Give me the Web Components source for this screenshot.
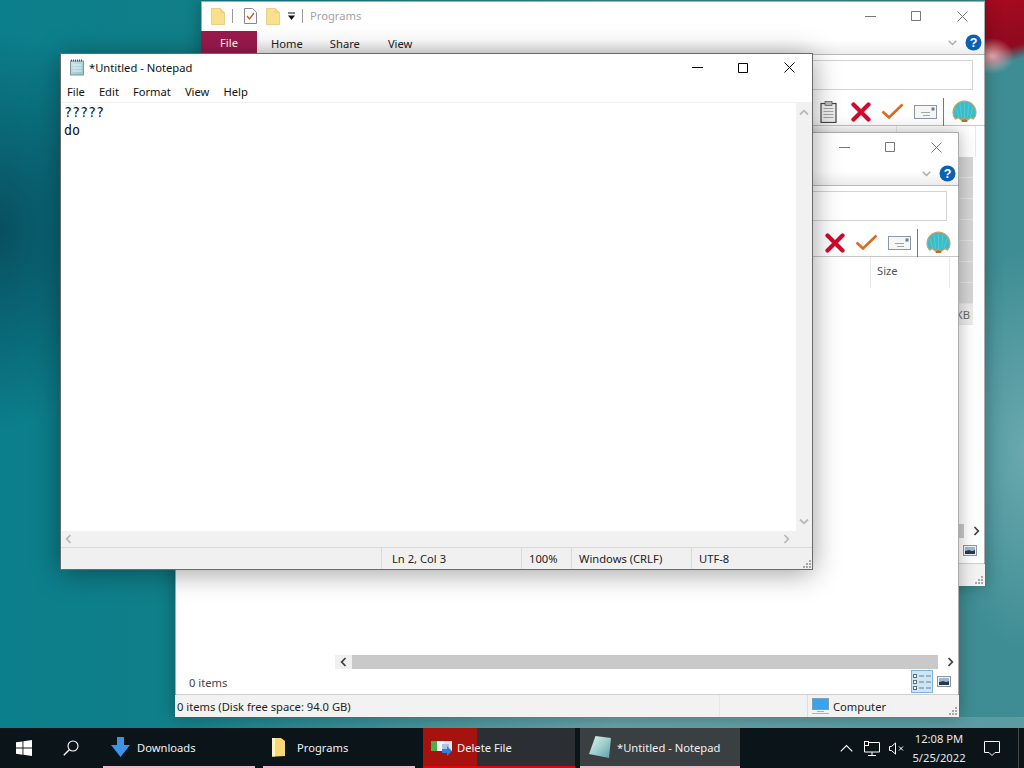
<!DOCTYPE html>
<html lang="en"><head><meta charset="utf-8"><title>Desktop</title>
<style>
html,body{margin:0;height:100%;overflow:hidden;font:11.2px "Noto Sans",sans-serif}
</style></head><body>
<win-desktop>
  <file-explorer slot="windows" id="a" style="--x:201px;--y:1px;--z:1" heading="Programs" quick>
    <file-row shade></file-row><file-row shade></file-row><file-row shade></file-row><file-row shade></file-row><file-row shade></file-row><file-row shade></file-row><file-row shade></file-row>
    <file-row>3 KB</file-row>
  </file-explorer>
  <file-explorer slot="windows" id="b" style="--x:175px;--y:132px;--z:2" heading="Computer" status>
  </file-explorer>
  <note-pad slot="windows" style="--x:60px;--y:53px;--z:3"></note-pad>
  <task-bar slot="bar"></task-bar>
</win-desktop>
<script>
const ICONS = {
  folder:`<svg width="14" height="17" viewBox="0 0 14 17"><path d="M.5.5h9l4 4v12H.5z" fill="#fbe08c" stroke="#e9cf8a"/><path d="M9.5.5v4h4" fill="#f7d877" stroke="#e9cf8a"/></svg>`,
  check:`<svg width="13" height="16" viewBox="0 0 13 16"><path d="M.5.5h8l4 4v11H.5z" fill="#fff" stroke="#888"/><path d="M3 8l2.500 3L10 5" fill="none" stroke="#d2521f" stroke-width="1.300"/></svg>`,
  caret:`<svg width="9" height="9" viewBox="0 0 9 9"><path d="M1 1h7" stroke="#111"/><path d="M1 3.500h7L4.500 8z" fill="#111"/></svg>`,
  min:`<svg width="11" height="11" viewBox="0 0 11 11"><path d="M0 5.500h11" stroke="currentColor"/></svg>`,
  max:`<svg width="10" height="10" viewBox="0 0 10 10"><path d="M.5.5h9v9h-9z" fill="none" stroke="currentColor"/></svg>`,
  close:`<svg width="11" height="11" viewBox="0 0 11 11"><path d="M.5.5l10 10M10.500.5l-10 10" stroke="currentColor"/></svg>`,
  chev:`<svg width="9" height="6" viewBox="0 0 9 6"><path d="M.7.7l3.800 3.800L8.300.7" fill="none" stroke="#aaa" stroke-width="1.400"/></svg>`,
  help:`<svg width="17" height="17" viewBox="0 0 17 17"><circle cx="8.500" cy="8.500" r="8" fill="#0d5fb3"/><text x="8.500" y="13" font-family="Liberation Sans" font-weight="700" font-size="12.500" text-anchor="middle" fill="#fff">?</text></svg>`,
  clip:`<svg width="17" height="22" viewBox="0 0 17 22"><rect x="1" y="2.500" width="15" height="19" fill="#efefef" stroke="#444" stroke-width="1.200"/><rect x="5" y=".5" width="7" height="4" fill="#bbb" stroke="#555" stroke-width=".7"/><path d="M3.500 7.500h10M3.500 10.500h10M3.500 13.500h10M3.500 16.500h10" stroke="#a5a5a5"/></svg>`,
  cross:`<svg width="20" height="20" viewBox="0 0 20 20"><path d="M2.500 2.500l15 15M17.500 2.500l-15 15" stroke="#cf0a2c" stroke-width="4.200" stroke-linecap="round"/></svg>`,
  tick:`<svg width="23" height="17" viewBox="0 0 23 17"><path d="M1.500 8.500l6.500 6L21.500 1.500" fill="none" stroke="#dd6a1f" stroke-width="2.600"/></svg>`,
  mail:`<svg width="23" height="14" viewBox="0 0 23 14"><rect x=".5" y=".5" width="22" height="13" fill="#f6f6f6" stroke="#8b98a4"/><rect x="17.500" y="2.500" width="3" height="3" fill="#667a90"/><path d="M7 7.500h9M9 10.500h7" stroke="#9aa"/></svg>`,
  shell:`<svg width="25" height="23" viewBox="0 0 25 23"><path d="M9 18.500h7l-.8 3.500H9.800z" fill="#b5712d"/><path d="M12.500 1.200C6 1.200 1 6.500 1 12.500c0 2.500 1 5 2.500 6.500l3-1.200L9 19.800l3.500-1.300 3.500 1.300 2.500-2 3 1.200c1.500-1.500 2.500-4 2.500-6.500 0-6-5-11.300-11.500-11.300z" fill="#3cbcc6" stroke="#c9a06c" stroke-width="1.200"/><path d="M12.500 3v15M8 3.500l1.500 14M17 3.500l-1.500 14M4 8l3 9M21 8l-3 9" stroke="#62d3da" stroke-width=".6"/></svg>`,
  detail:`<svg width="19" height="18" viewBox="0 0 19 18"><g fill="#fff" stroke="#5e6b75"><rect x=".5" y="1.500" width="3" height="3"/><rect x=".5" y="7.500" width="3" height="3"/><rect x=".5" y="13.500" width="3" height="3"/></g><path d="M6 3h5M13 3h5M6 9h5M13 9h5M6 15h5M13 15h5" stroke="#6f7f8b"/></svg>`,
  thumb:`<svg width="14" height="11" viewBox="0 0 14 11"><rect x=".5" y=".5" width="13" height="10" fill="#eef3f7" stroke="#8a99a6"/><path d="M2 2h10v3l-4 1-2-1-4 1z" fill="#9fb8d0"/><path d="M2 6l4-1 3 1 3-1v4H2z" fill="#27394b"/></svg>`,
  grip:`<svg width="10" height="10" viewBox="0 0 10 10" fill="#a8a8a8"><rect x="7" y="1" width="2" height="2"/><rect x="4" y="4" width="2" height="2"/><rect x="7" y="4" width="2" height="2"/><rect x="1" y="7" width="2" height="2"/><rect x="4" y="7" width="2" height="2"/><rect x="7" y="7" width="2" height="2"/></svg>`,
  left:`<svg width="7" height="10" viewBox="0 0 7 10"><path d="M5.500 1L1.700 5l3.800 4" fill="none" stroke="currentColor" stroke-width="1.800"/></svg>`,
  right:`<svg width="7" height="10" viewBox="0 0 7 10"><path d="M1.500 1l3.800 4-3.800 4" fill="none" stroke="currentColor" stroke-width="1.800"/></svg>`,
  up:`<svg width="10" height="7" viewBox="0 0 10 7"><path d="M1 5.500L5 1.700l4 3.800" fill="none" stroke="currentColor" stroke-width="1.800"/></svg>`,
  down:`<svg width="10" height="7" viewBox="0 0 10 7"><path d="M1 1.500l4 3.800 4-3.800" fill="none" stroke="currentColor" stroke-width="1.800"/></svg>`,
  monitor:`<svg width="17" height="16" viewBox="0 0 17 16"><rect x=".5" y=".5" width="16" height="11" fill="#3aa3ee" stroke="#7f9fb8"/><path d="M5 13.500h7" stroke="#8fb5d4"/><path d="M0 15.500h17" stroke="#9bb9d0"/></svg>`,
  note:`<svg width="16" height="17" viewBox="0 0 16 17"><defs><linearGradient id="n" x1="0" y1="0" x2="1" y2="1"><stop offset="0" stop-color="#cfe6ea"/><stop offset="1" stop-color="#8fc3cd"/></linearGradient></defs><rect x="1.500" y="2" width="13" height="14" fill="url(#n)" stroke="#80979e"/><path d="M3.500 6h9M3.500 9h9M3.500 12h9" stroke="#e4f2f4"/><path d="M2 1.500h12" stroke="#555" stroke-dasharray="1 1" stroke-width="2"/></svg>`,
  win:`<svg width="16" height="16" viewBox="0 0 16 16" fill="#fff"><path d="M0 2.300l6.500-.9v6.200H0zM7.400 1.300L16 0v7.600H7.400zM0 8.500h6.500v6.200L0 13.800zM7.400 8.500H16V16l-8.600-1.200z"/></svg>`,
  search:`<svg width="16" height="16" viewBox="0 0 16 16"><circle cx="10" cy="6" r="5" fill="none" stroke="#fff" stroke-width="1.100"/><path d="M6.300 9.700L.8 15.200" stroke="#fff" stroke-width="1.300"/></svg>`,
  dl:`<svg width="19" height="20" viewBox="0 0 19 20"><path d="M6 0h7v8h6l-9.500 12L0 8h6z" fill="#3a94ea"/></svg>`,
  tfolder:`<svg width="15" height="20" viewBox="0 0 15 20"><path d="M1 1h9l4 3v15l-9 .5H1z" fill="#f7d675"/><path d="M1 1h3v18.500H1z" fill="#fff3c4"/></svg>`,
  del:`<svg width="22" height="18" viewBox="0 0 22 18"><rect x="0" y="3" width="21" height="10" fill="#dfe4e6"/><rect x="0" y="3" width="6" height="10" fill="#47b04f"/><rect x="6" y="3" width="7" height="10" fill="#f4f6f7"/><path d="M11 6h7v7h-7z" fill="#a9c6ea"/><path d="M11 11h5V8l5 5-5 5v-3h-5z" fill="#2f7fe0"/></svg>`,
  tnote:`<svg width="22" height="24" viewBox="0 0 22 24"><defs><linearGradient id="t" x1="0" y1="0" x2="1" y2="1"><stop offset="0" stop-color="#e6f4f3"/><stop offset=".5" stop-color="#9fd0cf"/><stop offset="1" stop-color="#5f9ea2"/></linearGradient></defs><path d="M6.500 1L22 3l-2 20L0 19z" fill="url(#t)"/></svg>`,
  tup:`<svg width="13" height="8" viewBox="0 0 13 8"><path d="M.7 7.300L6.500 1.500l5.800 5.800" fill="none" stroke="#fff" stroke-width="1.100"/></svg>`,
  net:`<svg width="17" height="15" viewBox="0 0 17 15" fill="none" stroke="#fff"><path d="M.5 1.500h15v9.500h-15z" fill="#0b1519"/><rect x=".5" y=".5" width="4" height="4" fill="#0b1519"/><path d="M8 11v3.500M4 14.500h8"/></svg>`,
  vol:`<svg width="16" height="13" viewBox="0 0 16 13" fill="none" stroke="#fff"><path d="M.5 4.500h2L6.500.9v11.200l-4-3.600h-2z"/><path d="M10 4.500l4 4M14 4.500l-4 4"/></svg>`,
  msg:`<svg width="16" height="15" viewBox="0 0 16 15"><path d="M.5.500h15v11h-4.500l-3 3-3-3H.5z" fill="none" stroke="#fff"/></svg>`
};
const ic = n => ICONS[n];

class WinDesktop extends HTMLElement{constructor(){super();this.attachShadow({mode:'open'}).innerHTML=`<style>
:host{display:flex;flex-direction:column;width:1024px;height:768px;overflow:hidden;position:relative;
background:
 radial-gradient(ellipse 22px 18px at 992px 56px,#e6aeb2 0,rgba(230,174,178,0) 100%),
 linear-gradient(165deg,#a80a20 0,#8f0a1f 48px,#8f0a1f 52px,rgba(143,10,31,0) 66px) 985px 0/39px 90px no-repeat,
 radial-gradient(ellipse 130px 200px at 0 230px,#084f60 0,rgba(8,79,96,0) 100%),
 radial-gradient(ellipse 80px 200px at 1024px 450px,#6aa9ae 0,rgba(106,169,174,0) 100%),
 linear-gradient(90deg,#0b7f8c 0,#117f88 20%,#3c8d95 60%,#3f8d94 100%);}
.canvas{flex:1;position:relative}
.shade{position:absolute;left:0;right:0;bottom:0;height:11px;background:linear-gradient(90deg,rgba(0,0,0,0) 15%,rgba(180,200,200,.35) 60%,rgba(150,190,190,.3))}
</style><div class="canvas"><div class="shade"></div><slot name="windows"></slot></div><slot name="bar"></slot>`}}

class FileRow extends HTMLElement{constructor(){super();this.attachShadow({mode:'open'}).innerHTML=`<style>
:host{display:flex;height:21px;box-sizing:border-box;justify-content:flex-end;align-items:center;padding-right:3px;margin-right:12px;
 background:#ececec;color:#666;border-bottom:1px solid #e6e6e6;font-size:11.2px}
:host([shade]){background:#d6d6d6;border-bottom-color:#e4e4e4}
</style><slot></slot>`}}

class FileExplorer extends HTMLElement{
 constructor(){super();
  const q=this.hasAttribute('quick');
  this.attachShadow({mode:'open'}).innerHTML=`<style>
:host{position:absolute;left:var(--x);top:var(--y);z-index:var(--z);width:784px;height:585px;display:flex;flex-direction:column;
 background:#fff;color:#222;font:11.2px "Noto Sans",sans-serif;box-shadow:0 0 16px rgba(0,0,0,.3);outline:1px solid rgba(70,70,70,.45);outline-offset:-1px}
.title{height:30px;display:flex;align-items:center;padding-left:10px}
.title .t{color:#a3a3a3;margin:-1px 0 0 7px}
.q{display:flex;align-items:center}
.q>*{display:flex}
.sep{width:1px;height:14px;background:#999}
.sp{flex:1}
.btns{display:flex;align-self:stretch;color:#777}
.btns span{width:46px;display:flex;align-items:center;justify-content:center}
.tabs{height:23px;display:flex;align-items:stretch;border-bottom:1px solid #b9b9b9;background:linear-gradient(#fff 40%,#ececec);padding-right:3px}
.file{width:56px;background:#9b1a4c;color:#fff;display:flex;align-items:center;justify-content:center}
.tab{display:flex;align-items:center;margin-left:14px;margin-right:14px;padding-top:1px}
.tabs .end{display:flex;align-items:center;gap:8px}
.addr{padding:5px 12px 0 0;height:30px}
.addr div{height:28px;border:1px solid #d2d2d2;background:#fff}
.tools{height:36px;box-sizing:border-box;padding-top:8px;display:flex;align-items:center;justify-content:flex-end;border-bottom:1px solid #c8c8c8;padding-right:8px}
.tools span{display:flex;align-items:center;justify-content:center}
.tools .vr{width:1px;height:28px;background:#777;margin:0 8px 0 6px}
.head{height:31px;display:flex;justify-content:flex-end;padding-right:9px;flex:none}
.col{width:80px;box-sizing:border-box;border-left:1px solid #e8e8e8;border-right:1px solid #e8e8e8;padding:6px 0 0 6px;color:#555}
.rows{flex:1;min-height:0}
.hs{height:14px;margin-left:160px;display:flex;color:#444;flex:none}
.hs .ar{width:17px;background:#f0f0f0;display:flex;align-items:center;justify-content:center}
.hs .ar.r{width:21px;background:#fff;padding-left:4px;box-sizing:border-box}
.hs .tr{flex:1;background:#c9c9c9}
.foot{height:25px;display:flex;align-items:center;padding:0 5px 0 14px;border-bottom:1px solid #cfcfcf;flex:none;color:#444}
.foot .n{padding-top:1px}
.vb{width:22px;height:23px;box-sizing:border-box;background:#cde6f5;border:1px solid #7eb4d6;display:flex;align-items:center;justify-content:center}
.vb2{width:21px;display:flex;justify-content:center}
.status{height:22px;display:flex;align-items:center;background:#f2f2f2;padding-left:2px;flex:none;position:relative}
.status .d{border-left:1px solid #dcdcdc;height:100%;display:flex;align-items:center}
.status .g{position:absolute;right:1px;bottom:1px;display:flex}
</style>
<div class="title">
 <span class="q" style="${q?'':'visibility:hidden'}"><span>${ic('folder')}</span><i class="sep" style="margin-left:7px"></i><span style="margin-left:11px">${ic('check')}</span><span style="margin-left:9px">${ic('folder')}</span><span style="margin-left:7px">${ic('caret')}</span><i class="sep" style="margin-left:6px"></i></span>
 <span class="t">${this.getAttribute('heading')}</span><span class="sp"></span>
 <span class="btns"><span>${ic('min')}</span><span>${ic('max')}</span><span>${ic('close')}</span></span>
</div>
<div class="tabs"><span class="file">File</span><span class="tab">Home</span><span class="tab" style="margin-left:13px">Share</span><span class="tab" style="margin-left:14px">View</span><span class="sp"></span><span class="end">${ic('chev')}${ic('help')}</span></div>
<div class="addr"><div></div></div>
<div class="tools"><span style="margin-right:14px">${ic('clip')}</span><span style="margin-right:10px">${ic('cross')}</span><span style="margin-right:10px">${ic('tick')}</span><span>${ic('mail')}</span><i class="vr"></i><span>${ic('shell')}</span></div>
<div class="head"><div class="col">Size</div></div>
<div class="rows"><slot></slot></div>
<div class="hs"><span class="ar">${ic('left')}</span><span class="tr"></span><span class="ar r">${ic('right')}</span></div>
<div class="foot"><span class="n">0 items</span><span class="sp"></span><span class="vb">${ic('detail')}</span><span class="vb2">${ic('thumb')}</span></div>
<div class="status"><span style="width:542px;color:#222;white-space:nowrap">0 items (Disk free space: 94.0 GB)</span><span class="d" style="width:87px;border-left-color:#e6e6e6"></span><span class="d" style="padding-left:4px;gap:4px;${this.hasAttribute('status')?'':'visibility:hidden'}">${ic('monitor')}<span>Computer</span></span><span class="g">${ic('grip')}</span></div>`;
 }
}

class NotePad extends HTMLElement{constructor(){super();this.attachShadow({mode:'open'}).innerHTML=`<style>
:host{position:absolute;left:var(--x);top:var(--y);z-index:var(--z);width:753px;height:517px;box-sizing:border-box;display:flex;flex-direction:column;
 background:#fff;color:#111;border:1px solid #6a6a6a;font:11.2px "Noto Sans",sans-serif;box-shadow:0 3px 26px rgba(0,0,0,.38)}
.title{height:27px;display:flex;align-items:center;padding-left:8px;gap:4px;flex:none}
.sp{flex:1}
.btns{display:flex;align-self:stretch;color:#000}
.btns span{width:46px;display:flex;align-items:center;justify-content:center}
.menu{height:21px;display:flex;align-items:center;padding-left:6px;gap:14px;border-bottom:1px solid #f0f0f0;flex:none}
.body{flex:1;display:flex;min-height:0}
.text{flex:1;padding:1px 3px 0;margin:0;font:13.33px/18px "DejaVu Sans Mono","Liberation Mono",monospace}
.vs{width:16px;background:#f1f1f1;display:flex;flex-direction:column;justify-content:space-between;align-items:center;color:#b8b8b8;padding:6px 0}
.hs{height:16px;background:#f1f1f1;display:flex;justify-content:space-between;align-items:center;color:#b8b8b8;padding:0 22px 0 4px;flex:none}
.status{height:22px;display:flex;background:#f0f0f0;border-top:1px solid #d9d9d9;flex:none;align-items:stretch;box-sizing:border-box;position:relative}
.status span{display:flex;align-items:center;padding-left:7px;border-left:1px solid #dadada;box-sizing:border-box;color:#222}
.g{position:absolute;right:0;bottom:0;border:0!important;padding:0!important}
</style>
<div class="title">${ic('note')}<span>*Untitled - Notepad</span><span class="sp"></span><span class="btns"><span>${ic('min')}</span><span>${ic('max')}</span><span>${ic('close')}</span></span></div>
<div class="menu"><span>File</span><span>Edit</span><span>Format</span><span>View</span><span>Help</span></div>
<div class="body"><pre class="text">?????
do</pre><div class="vs">${ic('up')}${ic('down')}</div></div>
<div class="hs">${ic('left')}${ic('right')}</div>
<div class="status"><i style="width:320px"></i><span style="width:140px;padding-left:10px">Ln 2, Col 3</span><span style="width:50px">100%</span><span style="width:120px">Windows (CRLF)</span><span style="width:120px">UTF-8</span><span class="g">${ic('grip')}</span></div>`}}

class TaskButton extends HTMLElement{constructor(){super();this.attachShadow({mode:'open'}).innerHTML=`<style>
:host{display:flex;align-items:center;height:40px;box-sizing:border-box;border-bottom:2px solid #f3b9c8;padding-left:8px;gap:8px;color:#f2f2f2;font-size:11.2px;width:var(--w,152px);margin-right:8px;flex:none}
:host([alert]){border-bottom-color:#e8000d;background:linear-gradient(90deg,#a6130f 0,#a6130f 54px,#2b2f33 54px);margin-right:5px}
:host([active]){background:#3a3f42;margin-right:0}
</style><slot name="i"></slot><slot></slot>`}}

class TaskBar extends HTMLElement{constructor(){super();this.attachShadow({mode:'open'}).innerHTML=`<style>
:host{display:flex;height:40px;background:#0b1519;color:#fff;align-items:center;font-size:11.2px;flex:none;position:relative;z-index:9}
.ib{width:48px;display:flex;justify-content:center;align-items:center;height:40px}
.tray{display:flex;align-items:center;height:40px;flex:1}
.tray span{display:flex;align-items:center;justify-content:center}
.clock{width:74px;flex-direction:column;line-height:19px;text-align:center;margin:0 0 0 -3px;color:#e8e8e8}
.end{width:5px;height:40px;border-left:1px solid #444;margin-left:auto}
</style>
<span class="ib" style="margin-right:-1px">${ic('win')}</span><span class="ib" style="margin-right:8px">${ic('search')}</span>
<task-button><span slot="i" style="display:flex;margin-right:-1px">${ic('dl')}</span>Downloads</task-button>
<task-button><span slot="i" style="display:flex;margin-right:3px">${ic('tfolder')}</span>Programs</task-button>
<task-button alert><span slot="i" style="display:flex;margin-right:-4px">${ic('del')}</span>Delete File</task-button>
<task-button active style="--w:160px"><span slot="i" style="display:flex;margin-left:1px;margin-right:-2px">${ic('tnote')}</span>*Untitled - Notepad</task-button>
<div class="tray"><span style="margin-left:100px">${ic('tup')}</span><span style="margin-left:11px">${ic('net')}</span><span style="margin-left:8px">${ic('vol')}</span><span class="clock"><span>12:08 PM</span><span>5/25/2022</span></span><span style="margin-left:8px">${ic('msg')}</span><span class="end"></span></div>`}}

customElements.define('win-desktop',WinDesktop);
customElements.define('file-row',FileRow);
customElements.define('file-explorer',FileExplorer);
customElements.define('note-pad',NotePad);
customElements.define('task-button',TaskButton);
customElements.define('task-bar',TaskBar);
</script>
</body></html>
